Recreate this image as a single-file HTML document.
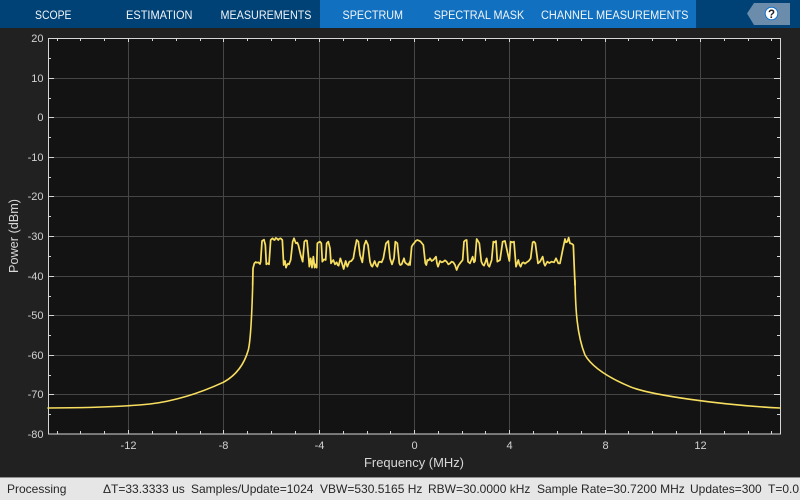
<!DOCTYPE html>
<html><head><meta charset="utf-8"><style>
html,body{margin:0;padding:0;width:800px;height:500px;overflow:hidden;background:#212121}
svg{display:block}
text{font-family:"Liberation Sans",Arial,sans-serif}
.tab{font-size:11.5px;fill:#f0f5fa}
.tk{font-size:11px;fill:#d2d2d2}
.y{text-anchor:end}
.x{text-anchor:middle}
.lb{font-size:13px;fill:#d8d8d8}
.st{font-size:12px;fill:#262626}
</style></head><body>
<svg width="800" height="500" viewBox="0 0 800 500" xmlns="http://www.w3.org/2000/svg">
<rect width="800" height="500" fill="#212121"/>
<rect width="800" height="28" fill="#004176"/>
<rect x="320" width="376" height="28" fill="#1170bf"/>
<text class="tab" x="35" y="19" textLength="36.5" lengthAdjust="spacingAndGlyphs">SCOPE</text>
<text class="tab" x="126" y="19" textLength="66.5" lengthAdjust="spacingAndGlyphs">ESTIMATION</text>
<text class="tab" x="220.5" y="19" textLength="91" lengthAdjust="spacingAndGlyphs">MEASUREMENTS</text>
<text class="tab" x="342.5" y="19" textLength="60.5" lengthAdjust="spacingAndGlyphs">SPECTRUM</text>
<text class="tab" x="433.7" y="19" textLength="90.5" lengthAdjust="spacingAndGlyphs">SPECTRAL MASK</text>
<text class="tab" x="541" y="19" textLength="147.5" lengthAdjust="spacingAndGlyphs">CHANNEL MEASUREMENTS</text>
<polygon points="747,13.5 754,3 790,3 790,25 754,25" fill="#6b8dab"/>
<circle cx="771.5" cy="13.5" r="6.3" fill="#fff" stroke="#1170d0" stroke-width="1"/>
<text x="771.5" y="17.8" text-anchor="middle" style="font-size:11.5px;font-weight:bold" fill="#222">?</text>

<rect x="48.5" y="38.5" width="732" height="396" fill="#131313"/>
<g stroke="#464646" stroke-width="1" fill="none">
<path d="M128.5 38V434M223.5 38V434M319.5 38V434M414.5 38V434M509.5 38V434M605.5 38V434M700.5 38V434"/>
<path d="M48 78.5H780M48 117.5H780M48 157.5H780M48 196.5H780M48 236.5H780M48 276.5H780M48 315.5H780M48 355.5H780M48 394.5H780"/>
</g>
<g stroke="#d6d6d6" stroke-width="1" fill="none">
<path d="M57.5 38v3M80.5 38v3M104.5 38v3M152.5 38v3M176.5 38v3M200.5 38v3M247.5 38v3M271.5 38v3M295.5 38v3M343.5 38v3M367.5 38v3M390.5 38v3M438.5 38v3M462.5 38v3M485.5 38v3M533.5 38v3M557.5 38v3M581.5 38v3M628.5 38v3M652.5 38v3M676.5 38v3M724.5 38v3M748.5 38v3M771.5 38v3"/>
<path d="M57.5 434v-3M80.5 434v-3M104.5 434v-3M152.5 434v-3M176.5 434v-3M200.5 434v-3M247.5 434v-3M271.5 434v-3M295.5 434v-3M343.5 434v-3M367.5 434v-3M390.5 434v-3M438.5 434v-3M462.5 434v-3M485.5 434v-3M533.5 434v-3M557.5 434v-3M581.5 434v-3M628.5 434v-3M652.5 434v-3M676.5 434v-3M724.5 434v-3M748.5 434v-3M771.5 434v-3"/>
<path d="M128.5 38v4M223.5 38v4M319.5 38v4M414.5 38v4M509.5 38v4M605.5 38v4M700.5 38v4M128.5 434v-4M223.5 434v-4M319.5 434v-4M414.5 434v-4M509.5 434v-4M605.5 434v-4M700.5 434v-4"/>
<path d="M48 58.5h3M48 98.5h3M48 137.5h3M48 177.5h3M48 216.5h3M48 256.5h3M48 296.5h3M48 335.5h3M48 375.5h3M48 414.5h3"/>
<path d="M48 78.5h6M48 117.5h6M48 157.5h6M48 196.5h6M48 236.5h6M48 276.5h6M48 315.5h6M48 355.5h6M48 394.5h6"/>
<path d="M780 58.5h-3M780 98.5h-3M780 137.5h-3M780 177.5h-3M780 216.5h-3M780 256.5h-3M780 296.5h-3M780 335.5h-3M780 375.5h-3M780 414.5h-3"/>
<path d="M780 78.5h-6M780 117.5h-6M780 157.5h-6M780 196.5h-6M780 236.5h-6M780 276.5h-6M780 315.5h-6M780 355.5h-6M780 394.5h-6"/>
<rect x="48.5" y="38.5" width="732" height="395.5"/>
</g>

<g fill="none" stroke="#f8df60" stroke-linejoin="round" stroke-linecap="round">
<path stroke-width="1.6" d="M48 408 C90 407.8 120 407 150 404 C175 401 200 393 223.3 382.3 C235 376 244 365 248.3 350 C251 339 252 310 252.7 285"/>
<path stroke-width="1.6" d="M575 280 C575.5 310 577 335 585 355 C592 367 607 377 630 386.7 C650 395 720 405 780 408"/>
<g transform="translate(240,225) scale(0.33333)" stroke-width="5.2">
<path d="M38 180 39 130 43 115 47 111 50 113 55 112 60 117 62 110 66 48 69 46 72 44 76 60 79 118 83 115 87 118 92 45 95 42 98 40 101 44 104 45 107 39 110 40 115 45 118 41 122 40 127 45 131 120 135 108 138 128 140 122 144 116 147 118 152 105 158 50 162 40 165 48 168 55 172 53 175 60 182 90 188 110 193 50 197 46 201 47 206 100 208 125 212 100 216 128 220 95 224 128 227 118 230 128 232 55 236 52 240 50 244 55 247 110 252 103 257 105 260 55 265 50 270 70 273 115 276 110 280 105 285 118 290 112 293 120 296 122 301 100 306 115 311 132 317 108 322 125 328 110 334 108 340 100 345 70 350 45 355 50 360 90 367 112 373 60 378 47 384 60 390 110 394 122 397 125 404 108 408 120 412 125 416 112 420 110 425 112 430 100 438 55 445 48 450 100 456 118 462 100 466 50 472 55 478 115 481 120 485 118 492 100 495 112 498 115 505 120 510 110"/>
</g>
<g transform="translate(410,225) scale(0.33333)" stroke-width="5.2">
<path d="M0 120 5 65 9 58 12 55 17 48 22 45 27 47 32 50 40 60 46 115 49 120 52 105 56 106 60 100 65 108 70 105 78 95 81 115 84 125 90 108 95 112 100 110 105 106 110 110 115 118 120 115 125 110 130 112 135 120 140 135 145 122 150 115 158 105 162 50 166 46 170 45 174 110 180 115 188 95 192 112 195 108 200 42 204 48 208 55 214 110 218 118 222 122 226 112 230 100 234 120 238 125 245 105 250 50 254 52 258 48 262 110 270 105 278 50 285 48 292 80 298 108 302 50 307 52 312 50 318 125 325 105 328 118 332 125 336 115 340 112 345 116 350 112 356 108 362 100 368 52 372 50 376 55 384 115 390 110 398 95 402 115 405 122 412 110 418 114 425 110 432 112 438 100 445 115 450 115 458 75 465 42 468 52 472 50 476 38 480 55 485 56 490 60 495 180"/>
</g>
</g>

<g class="tk">
<text class="tk y" x="43.5" y="42">20</text>
<text class="tk y" x="43.5" y="82">10</text>
<text class="tk y" x="43.5" y="121">0</text>
<text class="tk y" x="43.5" y="161">-10</text>
<text class="tk y" x="43.5" y="200">-20</text>
<text class="tk y" x="43.5" y="240">-30</text>
<text class="tk y" x="43.5" y="280">-40</text>
<text class="tk y" x="43.5" y="319">-50</text>
<text class="tk y" x="43.5" y="359">-60</text>
<text class="tk y" x="43.5" y="398">-70</text>
<text class="tk y" x="43.5" y="438">-80</text>
<text class="tk x" x="128.5" y="449">-12</text>
<text class="tk x" x="223.5" y="449">-8</text>
<text class="tk x" x="319.5" y="449">-4</text>
<text class="tk x" x="414.5" y="449">0</text>
<text class="tk x" x="509.5" y="449">4</text>
<text class="tk x" x="605.5" y="449">8</text>
<text class="tk x" x="700.5" y="449">12</text>
</g>
<text class="lb" x="364" y="467" textLength="100" lengthAdjust="spacingAndGlyphs">Frequency (MHz)</text>
<text class="lb" transform="translate(18,273) rotate(-90)" x="0" y="0" textLength="74" lengthAdjust="spacingAndGlyphs">Power (dBm)</text>

<rect y="477" width="800" height="23" fill="#e6e6e6"/>
<rect y="477" width="800" height="1" fill="#8f8f8f"/>
<text class="st" x="7" y="493">Processing</text>
<text class="st" x="103" y="493">ΔT=33.3333 us</text>
<text class="st" x="191" y="493">Samples/Update=1024</text>
<text class="st" x="320" y="493">VBW=530.5165 Hz</text>
<text class="st" x="428" y="493">RBW=30.0000 kHz</text>
<text class="st" x="537" y="493">Sample Rate=30.7200 MHz</text>
<text class="st" x="690" y="493">Updates=300</text>
<text class="st" x="768" y="493">T=0.01</text>
</svg>
</body></html>
